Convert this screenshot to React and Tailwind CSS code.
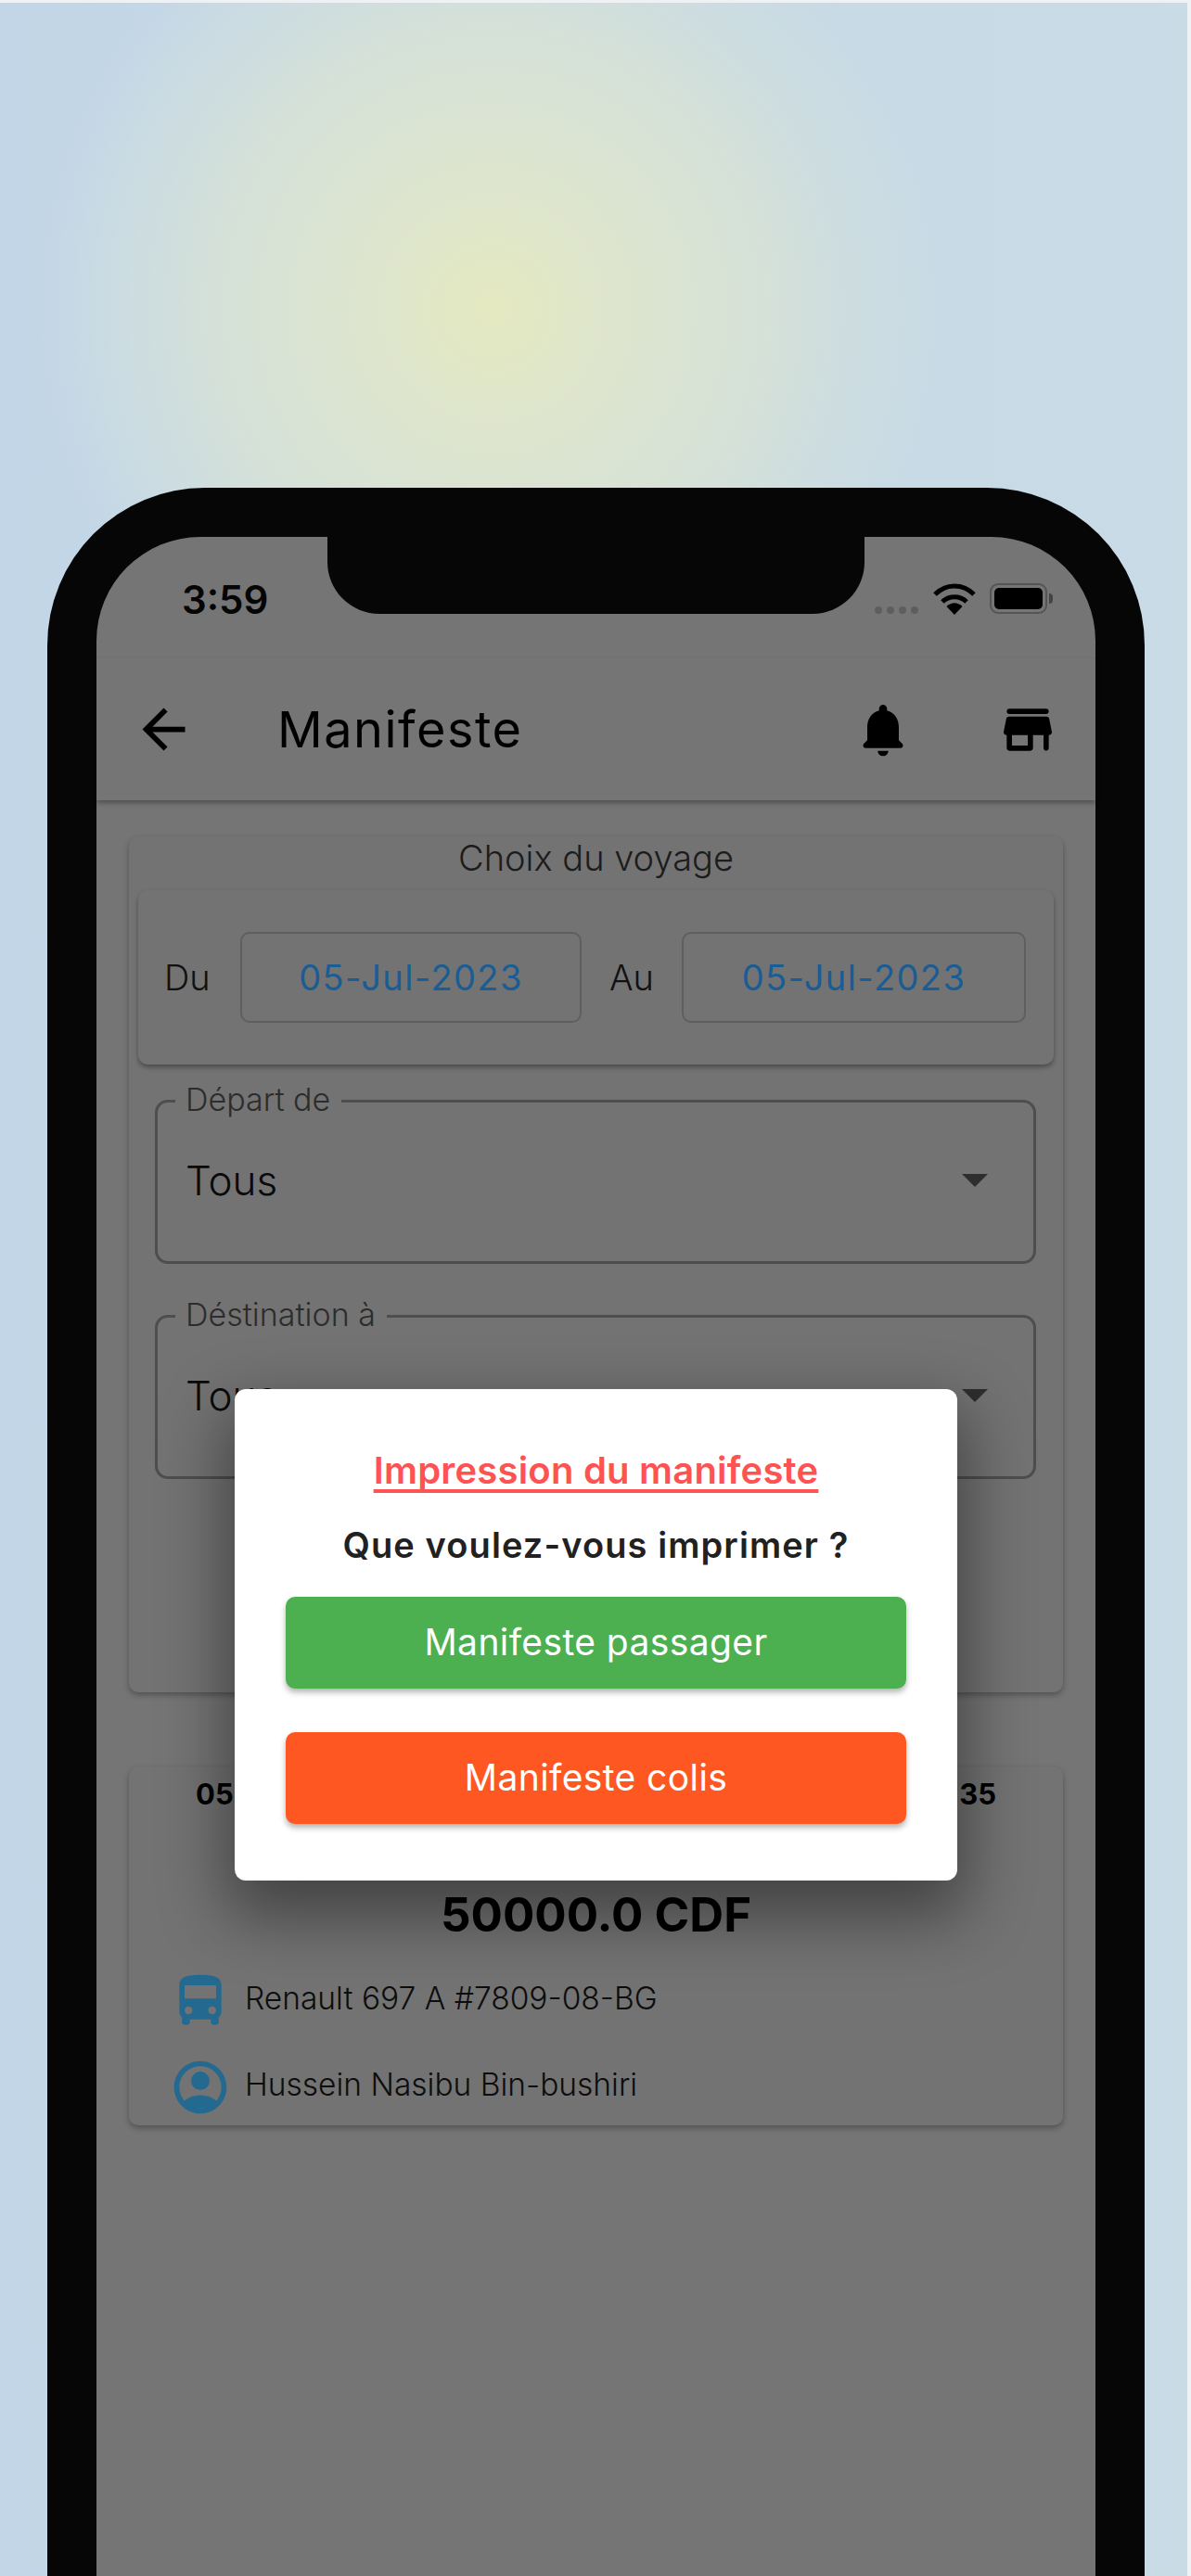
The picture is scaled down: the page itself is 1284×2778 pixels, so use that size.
const FONT = "font-['Inter','Noto_Sans',sans-serif]";

const Icon = ({ size, color, d, children }) => (
    <svg width={size} height={size} viewBox="0 0 24 24" fill={color} className="shrink-0">
        {d && <path d={d} />}
        {children}
    </svg>
);

const ARROW = "M20 11H7.83l5.59-5.59L12 4l-8 8 8 8 1.41-1.41L7.83 13H20v-2z";
const BELL = "M12 22c1.1 0 2-.9 2-2h-4c0 1.1.9 2 2 2zm6-6v-5c0-3.07-1.64-5.64-4.5-6.32V4c0-.83-.67-1.5-1.5-1.5s-1.5.67-1.5 1.5v.68C7.63 5.36 6 7.92 6 11v5l-1.29 1.29c-.63.63-.19 1.71.7 1.71h13.17c.89 0 1.34-1.08.71-1.71L18 16z";
const STORE = "M5 6h14c.55 0 1-.45 1-1s-.45-1-1-1H5c-.55 0-1 .45-1 1s.45 1 1 1zm15.16 1.8c-.09-.46-.5-.8-.98-.8H4.82c-.48 0-.89.34-.98.8l-1 5c-.12.62.35 1.2.98 1.2H4v5c0 .55.45 1 1 1h8c.55 0 1-.45 1-1v-5h4v5c0 .55.45 1 1 1s1-.45 1-1v-5h.18c.63 0 1.1-.58.98-1.2l-1-5zM12 18H6v-4h6v4z";
const BUS = "M4 16c0 .88.39 1.67 1 2.22V20c0 .55.45 1 1 1h1c.55 0 1-.45 1-1v-1h8v1c0 .55.45 1 1 1h1c.55 0 1-.45 1-1v-1.78c.61-.55 1-1.34 1-2.22V6c0-3.5-3.58-4-8-4s-8 .5-8 4v10zm3.5 1c-.83 0-1.5-.67-1.5-1.5S6.67 14 7.5 14s1.5.67 1.5 1.5S8.33 17 7.5 17zm9 0c-.83 0-1.5-.67-1.5-1.5s.67-1.5 1.5-1.5 1.5.67 1.5 1.5-.67 1.5-1.5 1.5zm1.5-6H6V6h12v5z";
const ACCOUNT = "M12 2C6.48 2 2 6.48 2 12s4.48 10 10 10 10-4.48 10-10S17.52 2 12 2zM7.35 18.5C8.66 17.56 10.26 17 12 17s3.34.56 4.65 1.5c-1.31.94-2.91 1.5-4.65 1.5s-3.34-.56-4.65-1.5zm10.79-1.38C16.45 15.8 14.32 15 12 15s-4.45.8-6.14 2.12C4.7 15.73 4 13.95 4 12c0-4.42 3.58-8 8-8s8 3.58 8 8c0 1.95-.7 3.73-1.86 5.12z";

const DateBox = ({ width }) => (
    <div className={`${width} h-[98px] flex items-center justify-center border-2 border-[#5f5f5f] rounded-[10px] text-[38px] text-[#1a5c94] tracking-[1.4px]`}>
        05-Jul-2023
    </div>
);

const Field = ({ label, labelWidth, className }) => (
    <div className={`relative h-[177px] ml-[28px] mr-[29px] border-[3px] border-[#4e4e4e] rounded-[14px] flex items-center justify-between pl-[30px] pr-[49px] pb-[3px] ${className}`}>
        <span className={`absolute -top-[22px] left-[19px] ${labelWidth} bg-[#737373] pl-[11px] text-left text-[34px] leading-[38px] text-[#2c2c2c] font-light`}>{label}</span>
        <span className="text-[44px] text-[#0a0a0a] font-light">Tous</span>
        <span className="w-0 h-0 border-x-[14px] border-x-transparent border-t-[14px] border-t-[#2e2e2e]" />
    </div>
);

export default function App() {
    return (
        <div className={`${FONT} h-[2778px] overflow-hidden border-t-[3px] border-r-[4px] border-[#eef2f4] pt-[523px] pl-[51px] bg-[radial-gradient(ellipse_490px_500px_at_530px_330px,#e4e9c0_0%,#dde5cf_30%,#d5e1d8_60%,#cddde0cc_82%,#c8dae500_100%),linear-gradient(90deg,#c3d6e7,#c9dbe5)]`}>
            <div className="h-[2300px] w-[1183px] rounded-t-[170px] bg-[#060606] pt-[53px] px-[53px]">
                <div className="relative h-[2200px] rounded-t-[112px] bg-[#757575]">
                    {/* notch */}
                    <div className="absolute top-0 left-[249px] w-[579px] h-[83px] bg-[#060606] rounded-b-[56px]" />

                    <div className="h-[131px] flex items-start justify-between pl-[92px] pr-[46px] pt-[43px]">
                        <span className="text-[42px] leading-[50px] font-semibold text-[#050505]">3:59</span>
                        <div className="flex items-start pt-[7px]">
                            <div className="flex gap-[5px] mt-[25px] mr-[16px]">
                                <span className="w-[8px] h-[8px] rounded-full bg-[#5e5e5e]" />
                                <span className="w-[8px] h-[8px] rounded-full bg-[#5e5e5e]" />
                                <span className="w-[8px] h-[8px] rounded-full bg-[#5e5e5e]" />
                                <span className="w-[8px] h-[8px] rounded-full bg-[#5e5e5e]" />
                            </div>
                            <svg width="46" height="34" viewBox="0 0 46 34" fill="none" stroke="#000" strokeWidth="5" className="mr-[15px]">
                                <path d="M2 12 C14 0 32 0 44 12" />
                                <path d="M10 20 C17 13 29 13 36 20" />
                                <path d="M14.5 25 L23 34 L31.5 25 C26 20 20 20 14.5 25 Z" fill="#000" stroke="none" />
                            </svg>
                            <div className="w-[62px] h-[33px] rounded-[9px] border-[2px] border-[#555555] p-[3px]">
                                <div className="w-full h-full rounded-[5px] bg-black" />
                            </div>
                            <div className="w-[4px] h-[11px] mt-[11px] ml-[2px] rounded-r-full bg-[#444444]" />
                        </div>
                    </div>

                    <header className="h-[153px] flex items-center pl-[38px] pr-[39px] shadow-[0_3px_5px_rgba(0,0,0,0.3)]">
                        <Icon size={69} color="#000" d={ARROW} />
                        <h1 className="ml-[88px] flex-1 text-[54px] tracking-[1.5px] font-normal text-black">Manifeste</h1>
                        <Icon size={68} color="#000" d={BELL} />
                        <div className="w-[88px]" />
                        <Icon size={68} color="#000" d={STORE} />
                    </header>

                    <main className="px-[35px] pt-[39px]">
                        <section className="h-[923px] rounded-[10px] bg-[#737373] shadow-[0_3px_6px_rgba(0,0,0,0.3)]">
                            <h2 className="h-[58px] pt-[1px] text-center text-[38px] leading-[44px] font-light text-[#1c1c1c]">Choix du voyage</h2>
                            <div className="mx-[10px] h-[188px] rounded-[10px] bg-[#737373] shadow-[0_3px_5px_rgba(0,0,0,0.35)] flex items-center px-[28px]">
                                <span className="w-[82px] text-[38px] font-light text-[#111111]">Du</span>
                                <DateBox width="w-[368px]" />
                                <span className="ml-[30px] w-[78px] text-[38px] font-light text-[#111111]">Au</span>
                                <DateBox width="w-[371px]" />
                            </div>
                            <Field label="Départ de" labelWidth="w-[179px]" className="mt-[38px]" />
                            <Field label="Déstination à" labelWidth="w-[228px]" className="mt-[55px]" />
                        </section>

                        <section className="h-[387px] mt-[80px] rounded-[10px] bg-[#737373] shadow-[0_3px_6px_rgba(0,0,0,0.3)] pt-[8px]">
                            <div className="flex justify-between pl-[72px] pr-[72px] text-[31px] leading-[44px] font-bold text-black">
                                <span>05-Jul-2023</span>
                                <span>09:35</span>
                            </div>
                            <div className="mt-[80px] text-center text-[51px] leading-[56px] font-bold text-black">50000.0 CDF</div>
                            <div className="mt-[31px] flex items-center gap-[14px] pl-[43px]">
                                <Icon size={68} color="#24698f" d={BUS} />
                                <span className="pb-[6px] text-[33.5px] font-light text-[#0d0d0d]">Renault 697 A #7809-08-BG</span>
                            </div>
                            <div className="mt-[25px] flex items-center gap-[14px] pl-[43px]">
                                <Icon size={68} color="#24698f" d={ACCOUNT}>
                                    <circle cx="12" cy="9.5" r="3.5" />
                                    <path d="M6 18c2-2.4 10-2.4 12 0l-2 2h-8z" />
                                </Icon>
                                <span className="pb-[6px] text-[33.5px] font-light text-[#0d0d0d]">Hussein Nasibu Bin-bushiri</span>
                            </div>
                        </section>
                    </main>

                    {/* dialog */}
                    <div className="absolute left-[149px] top-[919px] w-[779px] h-[530px] rounded-[12px] bg-white shadow-[0_30px_70px_10px_rgba(0,0,0,0.42)] px-[55px] pt-[65px]">
                        <p className="text-center text-[40px] leading-[46px] tracking-[0.2px] font-semibold text-[#ff5252] underline decoration-[4px] underline-offset-[6px] [text-decoration-skip-ink:none]">Impression du manifeste</p>
                        <p className="mt-[34px] text-center text-[38px] leading-[46px] tracking-[1.1px] font-semibold text-[#212121]">Que voulez-vous imprimer ?</p>
                        <button className="mt-[33px] w-full h-[99px] rounded-[10px] bg-[#4caf50] text-[39px] tracking-[0.4px] font-normal text-white shadow-[0_4px_6px_rgba(0,0,0,0.3)]">Manifeste passager</button>
                        <button className="mt-[47px] w-full h-[99px] rounded-[10px] bg-[#ff5722] text-[39px] tracking-[0.4px] font-normal text-white shadow-[0_4px_6px_rgba(0,0,0,0.3)]">Manifeste colis</button>
                    </div>
                </div>
            </div>
        </div>
    );
}
